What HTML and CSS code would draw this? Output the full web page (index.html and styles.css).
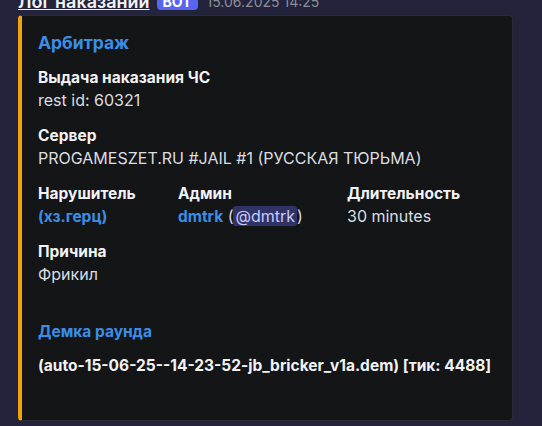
FILE: index.html
```html
<!DOCTYPE html>
<html lang="ru">
  <head>
    <meta charset="UTF-8" />
    <meta name="viewport" content="width=device-width, initial-scale=1.0" />
    <title>Лог наказаний</title>
    <link rel="stylesheet" href="styles.css">
  </head>
  <body>
    <div class="message">
      <div class="header">
        <span class="author">Лог наказаний</span>
        <span class="bot-tag">BOT</span>
        <span class="time">15.06.2025 14:25</span>
      </div>
      <div class="embed">
        <div class="embed-body">
          <div class="embed-title">Арбитраж</div>
          <div class="field">
            <div class="field-name">Выдача наказания ЧС</div>
            <div class="field-value">rest id: 60321</div>
          </div>
          <div class="field">
            <div class="field-name">Сервер</div>
            <div class="field-value">PROGAMESZET.RU #JAIL #1 (РУССКАЯ ТЮРЬМА)</div>
          </div>
          <div class="inline-fields">
            <div class="field">
              <div class="field-name">Нарушитель</div>
              <div class="field-value"><span class="link">(хз.герц)</span></div>
            </div>
            <div class="field">
              <div class="field-name">Админ</div>
              <div class="field-value"><span class="link">dmtrk</span> (<span class="mention">@dmtrk</span>)</div>
            </div>
            <div class="field">
              <div class="field-name">Длительность</div>
              <div class="field-value">30 minutes</div>
            </div>
          </div>
          <div class="field">
            <div class="field-name">Причина</div>
            <div class="field-value">Фрикил</div>
          </div>
          <div class="demo">
            <div class="demo-title">Демка раунда</div>
            <div class="demo-file">(auto-15-06-25--14-23-52-jb_bricker_v1a.dem) [тик: 4488]</div>
          </div>
        </div>
      </div>
    </div>
  </body>
</html>
```

FILE: styles.css
```css
body {
  margin: 0;
  background-color: #23243b;
  font-family: Inter, "Noto Sans", sans-serif;
  font-size: 16px;
  color: #dbdee1;
}
.message {
  margin-top: -10px;
  padding-left: 18px;
  width: 495px;
}
.header {
  display: flex;
  align-items: center;
  gap: 7px;
  height: 22px;
  margin-bottom: 3px;
}
.author {
  color: #f2f3f5;
  font-weight: 600;
  font-size: 18px;
  text-decoration: underline;
}
.bot-tag {
  background-color: #5865f2;
  color: #fff;
  font-size: 14px;
  font-weight: 700;
  padding: 0 6px;
  border-radius: 4px;
  line-height: 17px;
}
.time {
  color: #8c8f99;
  font-size: 14px;
  margin-left: 2px;
}
.embed {
  display: flex;
  background-color: #141517;
  border: 1px solid #2b2c31;
  border-left: 4px solid #f0a30a;
  border-radius: 4px;
  height: 406px;
  box-sizing: border-box;
}
.embed-body {
  padding: 14px 16px 16px 16px;
  display: flex;
  flex-direction: column;
  gap: 14px;
  width: 100%;
}
.embed-title {
  color: #3b8ee6;
  font-weight: 700;
  font-size: 17.5px;
  line-height: 26px;
  margin-bottom: -3px;
}
.field-name {
  color: #f2f3f5;
  font-weight: 700;
  font-size: 15.5px;
  line-height: 22px;
}
.field-value {
  line-height: 22px;
}
.inline-fields {
  display: grid;
  grid-template-columns: 140px 169px auto;
  margin-bottom: -1px;
}
.link {
  color: #3b8ee6;
  font-weight: 700;
  font-size: 15.5px;
}
.mention {
  background-color: #2f3366;
  color: #c7ccfa;
  border-radius: 3px;
  padding: 0 2px;
}
.demo {
  margin-top: 22px;
}
.demo-title {
  color: #3b8ee6;
  font-weight: 700;
  font-size: 15.5px;
  line-height: 22px;
  margin-bottom: 12px;
}
.demo-file {
  color: #f2f3f5;
  font-weight: 700;
  font-size: 15.5px;
  line-height: 22px;
}
```
